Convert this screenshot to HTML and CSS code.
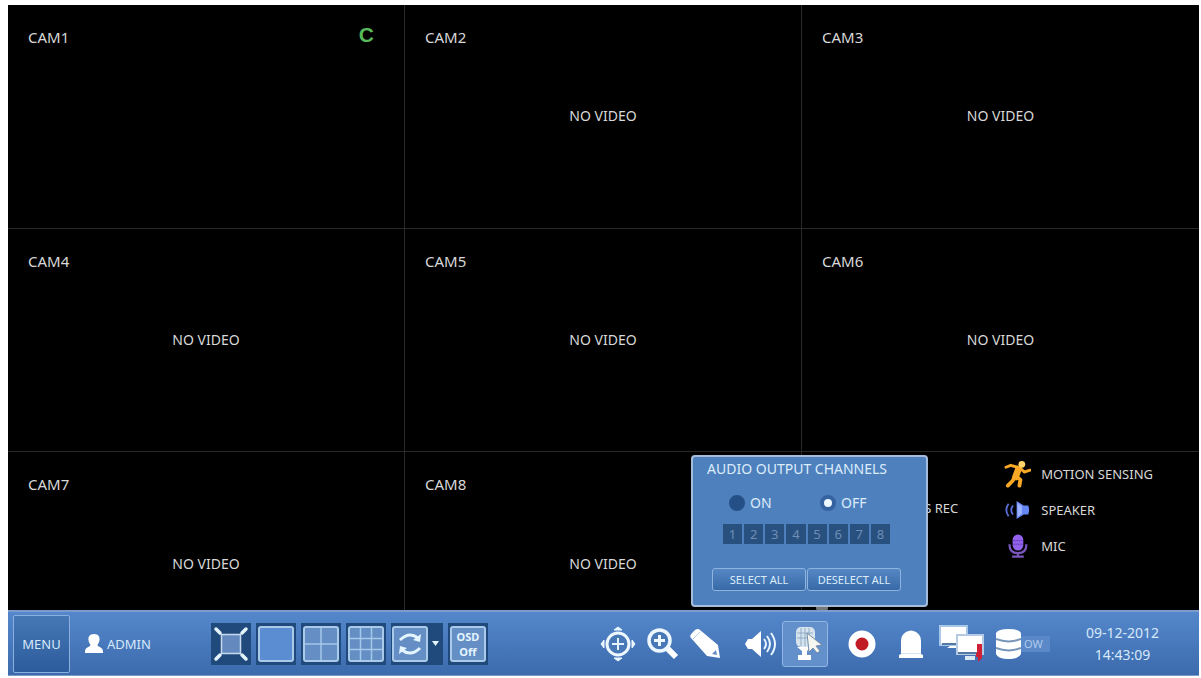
FILE: index.html
```html
<!DOCTYPE html>
<html lang="en">
<head>
<meta charset="utf-8">
<meta name="viewport" content="width=device-width, initial-scale=1">
<title>Live view</title>
<link rel="stylesheet" href="styles.css">
</head>
<body>
<main class="screen">
  <section class="cameras">
    <article class="cam"><h2 class="cam-name">CAM1</h2><span class="rec-mode">C</span></article>
    <article class="cam"><h2 class="cam-name">CAM2</h2><p class="no-video">NO VIDEO</p></article>
    <article class="cam"><h2 class="cam-name">CAM3</h2><p class="no-video">NO VIDEO</p></article>
    <article class="cam"><h2 class="cam-name">CAM4</h2><p class="no-video">NO VIDEO</p></article>
    <article class="cam"><h2 class="cam-name">CAM5</h2><p class="no-video">NO VIDEO</p></article>
    <article class="cam"><h2 class="cam-name">CAM6</h2><p class="no-video">NO VIDEO</p></article>
    <article class="cam"><h2 class="cam-name">CAM7</h2><p class="no-video">NO VIDEO</p></article>
    <article class="cam"><h2 class="cam-name">CAM8</h2><p class="no-video">NO VIDEO</p></article>
    <article class="cam legend">
      <p class="legend-rec">S REC</p>
      <ul class="legend-list">
        <li><svg class="legend-icon" viewBox="0 0 28 28"><g fill="none" stroke="#f9a825" stroke-linecap="round" stroke-linejoin="round"><path d="M15 9 12 17" stroke-width="7"/><path d="M14 7 7 5 2 7M17 8 21 12 27 10" stroke-width="3"/><path d="M13 17 17 20 16 26M11 17 9 21 4 26" stroke-width="4"/></g><circle cx="18.500" cy="4" r="3.500" fill="#ffd46a"/></svg>MOTION SENSING</li>
        <li><svg class="legend-icon" viewBox="0 0 28 28"><path d="M13 4v20l8-5h5q2-5 0-10h-5z" fill="#6688f5"/><path d="M14 6v16l5-4V10z" fill="#9bb2ff"/><path d="M9 9q-4 5 0 10M4 7q-5 7 0 14" fill="none" stroke="#5a6fd8" stroke-width="2"/></svg>SPEAKER</li>
        <li><svg class="legend-icon" viewBox="0 0 28 28"><rect x="8.500" y="1" width="12" height="18" rx="6" fill="#9262ef"/><path d="M5 12q0 10 9.500 10T24 12M14.500 22v4M8 26h13" fill="none" stroke="#7a56bd" stroke-width="2.500"/><path d="M9 8h11M9 12h11" stroke="#6741b5"/></svg>MIC</li>
      </ul>
      <span class="legend-mark"></span>
    </article>
  </section>

  <form class="audio-panel">
    <h1 class="panel-title">AUDIO OUTPUT CHANNELS</h1>
    <div class="switch">
      <label class="option"><input class="radio" type="radio" name="audio">ON</label>
      <label class="option"><input class="radio" type="radio" name="audio" checked>OFF</label>
    </div>
    <div class="channels">
      <button type="button" class="channel">1</button><button type="button" class="channel">2</button><button type="button" class="channel">3</button><button type="button" class="channel">4</button><button type="button" class="channel">5</button><button type="button" class="channel">6</button><button type="button" class="channel">7</button><button type="button" class="channel">8</button>
    </div>
    <div class="actions">
      <button type="button" class="action">SELECT ALL</button>
      <button type="button" class="action">DESELECT ALL</button>
    </div>
  </form>

  <nav class="toolbar">
    <button type="button" class="menu">MENU</button>
    <div class="user"><svg width="18" height="20" viewBox="0 0 18 20"><path d="M9 0c4.500 0 6 3 5.500 6-.3 2.500-1.500 4-2 5 0 2 5.500 2 5.500 6.500V19H0v-1.500C0 13 5.500 13 5.500 11c-.5-1-1.700-2.500-2-5C3 3 4.500 0 9 0z" fill="#fff"/></svg>ADMIN</div>

    <div class="views">
      <button type="button" class="view" aria-label="Full screen"><svg width="36" height="36" viewBox="0 0 36 36"><rect x="8.500" y="8.500" width="19" height="19" fill="#6389bf" stroke="#c5dbed" stroke-width="1.500"/><path d="M3 3 7 7M33 3 29 7M3 33 7 29M33 33 29 29" stroke="#e4f4fb" stroke-width="3.500" stroke-linecap="round"/></svg></button>
      <button type="button" class="view" aria-label="Single view"><svg width="36" height="36" viewBox="0 0 36 36"><rect x="1" y="1" width="34" height="34" rx="2" fill="#5b8dd2" stroke="#a9cae8" stroke-width="2"/></svg></button>
      <button type="button" class="view" aria-label="Four views"><svg width="36" height="36" viewBox="0 0 36 36"><rect x="1" y="1" width="34" height="34" rx="2" fill="#658fc4" stroke="#a9cae8" stroke-width="2"/><path d="M18 2v32M2 18h32" stroke="#a2c8ea" stroke-width="1.500"/></svg></button>
      <button type="button" class="view" aria-label="Nine views"><svg width="36" height="36" viewBox="0 0 36 36"><rect x="1" y="1" width="34" height="34" rx="2" fill="#658fc4" stroke="#a9cae8" stroke-width="2"/><path d="M12.500 2v32M23.500 2v32M2 12.500h32M2 23.500h32" stroke="#a2c8ea" stroke-width="1.500"/></svg></button>
      <button type="button" class="view" aria-label="Sequence"><svg width="50" height="36" viewBox="0 0 50 36"><rect x="1" y="1" width="34" height="34" rx="2" fill="#658fc4" stroke="#a9cae8" stroke-width="2"/><g fill="none" stroke="#e4f5ff" stroke-width="3"><path d="M8 14q9-9 18-2"/><path d="M28 22q-9 9-18 2"/></g><path d="m29 8-1 8-7-2zM7 28l1-8 7 2z" fill="#e4f5ff"/><path d="M40 15h7l-3.500 5z" fill="#e4f5ff"/></svg></button>
      <button type="button" class="view"><span class="osd"><span>OSD</span><span>Off</span></span></button>
    </div>

    <div class="tools">
      <button type="button" class="tool" aria-label="Pan and tilt"><svg width="36" height="36" viewBox="0 0 36 36"><circle cx="18" cy="18" r="11" fill="#4878b5" stroke="#edf7ff" stroke-width="3"/><path d="M18 12v12M12 18h12" stroke="#e3f3ff" stroke-width="2"/><path d="m14 4 4-3 4 3zM14 32l4 3 4-3zM4 14l-3 4 3 4zM32 14l3 4-3 4z" fill="#edf7ff" stroke="#edf7ff" stroke-linejoin="round"/></svg></button>
      <button type="button" class="tool" aria-label="Zoom"><svg width="32" height="32" viewBox="0 0 32 32"><path d="M20 20 29 29" stroke="#fff" stroke-width="6"/><circle cx="12.500" cy="12.500" r="10.500" fill="#4878b5" stroke="#edf7ff" stroke-width="3.500"/><path d="M12.500 7v11M7 12.500h11" stroke="#edf7ff" stroke-width="3"/></svg></button>
      <button type="button" class="tool" aria-label="Draw"><svg width="30" height="30" viewBox="0 0 30 30"><path d="M2 4 5 1q3-2 5 0L28 16l2 13-13-2L1 9q-2-2 1-5z" fill="#fff"/><path d="M3 10 10 3" stroke="#b2cbe8"/><path d="m26 21 1 5-5-1z" fill="#658ac0"/></svg></button>
      <button type="button" class="tool speaker" aria-label="Sound"><svg width="32" height="30" viewBox="0 0 32 30"><path d="M16 2v26l-9-8H3l-3-5 3-5h4z" fill="#fff"/><g fill="none" stroke="#e9f5ff" stroke-width="2"><path d="M19 10q4 5 0 10"/><path d="M22 7q6 8 0 16"/><path d="M26 4q8 11 0 22"/></g></svg></button>
      <button type="button" class="tool active" aria-label="Audio output"><svg width="44" height="44" viewBox="0 0 44 44"><rect x="13" y="5" width="19" height="20" rx="5" fill="#d7e4ed"/><path d="M18 6v18M22 6v18M26 6v18M14 11h16M14 16h16" stroke="#8facc9"/><path d="M14 25h14l-4 4v4h4v5H15v-5h4v-4z" fill="#fff"/><path d="m24 11 15 12-6 1 4 5-3 2-4-5-4 4z" fill="#f5f6f0" stroke="#738da9"/></svg></button>
      <button type="button" class="tool" aria-label="Record"><svg width="28" height="28" viewBox="0 0 28 28"><circle cx="14" cy="14" r="13.500" fill="#fff"/><circle cx="14" cy="14" r="6.500" fill="#c11c25"/></svg></button>
      <button type="button" class="tool" aria-label="Alarm"><svg width="24" height="28" viewBox="0 0 24 28"><path d="M2 24V11Q2 5 7 2q5-3 10 0 5 3 5 9v13l2 1v3H0v-3z" fill="#fff"/><path d="M2 23.500h20" stroke="#d6e6f5"/></svg></button>
      <button type="button" class="tool" aria-label="Network"><svg width="46" height="38" viewBox="0 0 46 38"><rect x="1" y="1" width="27" height="19" fill="#fff" stroke="#a9c8e8" stroke-width="2"/><path d="M3 19h18" stroke="#5378a4" stroke-width="2"/><path d="M8 23h9v3h3v-5H11z" fill="#fff"/><rect x="18" y="10" width="26" height="19" fill="#fff" stroke="#b5cbe3" stroke-width="2"/><path d="M19 28h20" stroke="#5378a4" stroke-width="2"/><path d="M26 31h10v4H26z" fill="#dae7f4"/><path d="M38 19h5v14l-4 4v-5h-2v-4h1z" fill="#cf2036"/></svg></button>
      <div class="disk"><svg width="25" height="30" viewBox="0 0 25 30"><path d="M0 4q2-4 12.500-4T25 4v21q-2 5-12.500 5T0 25z" fill="#fff"/><path d="M0 10q12.500 5 25 0M0 19q12.500 5 25 0" fill="none" stroke="#7795b8" stroke-width="2"/></svg><span class="disk-mode">OW</span></div>
    </div>
    <time class="clock" datetime="2012-09-12T14:43:09">09-12-2012<br>14:43:09</time>
  </nav>
</main>
</body>
</html>
```
FILE: styles.css
```css
* {
  box-sizing: border-box;
}

body {
  margin: 0;
  padding: 5px 2px 2px 8px;
  background: #fff;
  color: #d8d8d8;
  font-family: "Noto Sans", "Open Sans", sans-serif;
  font-size: 14px;
  line-height: 20px;
}

h1, h2, p, ul {
  margin: 0;
  padding: 0;
  font-size: inherit;
  font-weight: 400;
  list-style: none;
}

button {
  padding: 0;
  border: 0;
  background: none;
  color: inherit;
  font: inherit;
}

svg {
  display: block;
  flex: none;
}

.screen {
  position: relative;
  display: flex;
  min-height: calc(100vh - 7px);
  background: #000;
}

.cameras {
  flex: 1;
  display: grid;
  grid-template-columns: repeat(3, 1fr);
  grid-template-rows: repeat(3, 1fr);
}

.cam {
  position: relative;
  display: grid;
  place-items: center;
  border-right: 1px solid #292929;
  border-bottom: 1px solid #292929;
}

.cam:nth-child(3n) {
  border-right: 0;
}

/* Overlays on the video picture */
.cam-name {
  position: absolute;
  top: 22px;
  left: 20px;
  font-size: 15px;
}

.rec-mode {
  position: absolute;
  top: 20px;
  right: 30px;
  color: #58b958;
  font-family: "Liberation Sans", sans-serif;
  font-size: 21px;
  font-weight: 700;
}

.legend {
  display: flex;
  align-items: flex-start;
  justify-content: flex-end;
  gap: 46px;
  padding: 8px 46px 0 0;
  font-size: 13px;
}

.legend-rec {
  padding-top: 38px;
}

.legend-list {
  display: grid;
  gap: 8px;
}

.legend-list li {
  display: flex;
  align-items: center;
  gap: 10px;
}

.legend-icon {
  width: 27px;
  height: 28px;
}

.legend-list li + li .legend-icon {
  padding: 1px;
}

.legend-mark {
  position: absolute;
  bottom: 64px;
  left: 14px;
  width: 12px;
  height: 6px;
  border-radius: 4px;
  background: #777;
}

.audio-panel {
  position: absolute;
  right: 271px;
  bottom: 69px;
  width: 237px;
  padding: 2px 21px 14px 14px;
  border: 2px solid #a5bddb;
  border-radius: 4px;
  background: #4e80bd;
  color: #dcecfb;
}

.panel-title {
  white-space: nowrap;
}

.switch {
  display: grid;
  grid-template-columns: 91px 1fr;
  margin: 14px 0 11px 22px;
}

.option {
  display: flex;
  align-items: center;
  gap: 5px;
}

.radio {
  appearance: none;
  width: 16px;
  height: 16px;
  margin: 0;
  border: 4px solid #244f87;
  border-radius: 50%;
  background: #244f87;
}

.radio:checked {
  border-color: #3562a0;
  background: #edf8ff;
}

.channels {
  display: grid;
  grid-template-columns: repeat(8, 1fr);
  gap: 2px;
  margin: 0 15px 24px 16px;
}

.channel {
  height: 20px;
  background: #29517f;
  color: #6d8eb6;
  font-size: 13px;
  line-height: 20px;
}

.actions {
  display: grid;
  grid-template-columns: 1fr 1fr;
  gap: 1px;
  margin: 0 4px 0 5px;
}

.action {
  height: 23px;
  border: 1px solid #8db3de;
  border-radius: 3px;
  background: linear-gradient(#5487c3, #376aa7);
  font-size: 11px;
  white-space: nowrap;
}

.toolbar {
  position: absolute;
  right: 0;
  bottom: 0;
  left: 0;
  display: flex;
  align-items: center;
  min-height: 66px;
  padding: 0 40px 0 5px;
  border-top: 2px solid #7b9ccd;
  border-bottom: 1px solid #7b9ccd;
  background: linear-gradient(#5487cb, #3c6bad);
  color: #d7e8fa;
  font-size: 13px;
}

.menu {
  width: 57px;
  height: 58px;
  border: 1px solid #8bb0df;
  border-radius: 2px;
  background: linear-gradient(#4577b5, #2d5c9c);
}

.user {
  display: flex;
  align-items: center;
  gap: 4px;
  margin-left: 15px;
}

.views {
  display: flex;
  gap: 5px;
  margin-left: 60px;
}

.view {
  display: grid;
  place-items: center;
  min-width: 40px;
  height: 42px;
  padding: 0 1px;
  background: #214a7c;
}

.osd {
  display: grid;
  align-content: center;
  width: 36px;
  height: 36px;
  border: 2px solid #a9cae8;
  border-radius: 3px;
  background: #658fc4;
  color: #e4f5ff;
  font-size: 11px;
  font-weight: 700;
  line-height: 15px;
}

.tools {
  display: flex;
  align-items: center;
  gap: 11px;
  margin-left: auto;
}

.speaker {
  margin: 0 -6px 0 14px;
}

.active {
  border: 1px solid #91b6e5;
  border-radius: 3px;
  background: #6390cb;
}

.active + .tool {
  margin: 0 12px 0 9px;
}

.tool:nth-child(8) {
  margin-left: 5px;
}

.disk {
  display: flex;
  align-items: center;
}

.disk-mode {
  width: 29px;
  padding: 0 3px;
  background: #5a88c8;
  color: #b0cced;
  font-size: 11px;
  line-height: 16px;
}

.clock {
  margin-left: 36px;
  padding-right: 0;
  font-size: 14px;
  line-height: 22px;
  text-align: center;
}
```
